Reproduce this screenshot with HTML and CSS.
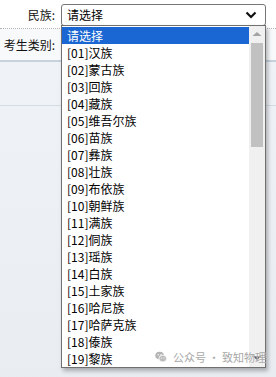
FILE: index.html
```html
<!DOCTYPE html>
<html>
<head>
<meta charset="utf-8">
<link rel="stylesheet" href="styles.css">
</head>
<body>
<div class="page">
  <div class="row row-top">
    <span class="label">民族:</span>
    <div class="select">
      <span class="select-text">请选择</span>
      <svg class="chev" width="12" height="8" viewBox="0 0 12 8"><polyline points="1.5,1.5 6,6 10.5,1.5" fill="none" stroke="#111" stroke-width="2.2"/></svg>
    </div>
  </div>
  <div class="row row-second">
    <span class="label">考生类别:</span>
  </div>
  <div class="rest">
    <div class="rest-line"></div>
  </div>

  <div class="dropdown">
    <ul class="options">
      <li class="opt sel">请选择</li>
      <li class="opt">[01]汉族</li>
      <li class="opt">[02]蒙古族</li>
      <li class="opt">[03]回族</li>
      <li class="opt">[04]藏族</li>
      <li class="opt">[05]维吾尔族</li>
      <li class="opt">[06]苗族</li>
      <li class="opt">[07]彝族</li>
      <li class="opt">[08]壮族</li>
      <li class="opt">[09]布依族</li>
      <li class="opt">[10]朝鲜族</li>
      <li class="opt">[11]满族</li>
      <li class="opt">[12]侗族</li>
      <li class="opt">[13]瑶族</li>
      <li class="opt">[14]白族</li>
      <li class="opt">[15]土家族</li>
      <li class="opt">[16]哈尼族</li>
      <li class="opt">[17]哈萨克族</li>
      <li class="opt">[18]傣族</li>
      <li class="opt">[19]黎族</li>
    </ul>
    <div class="scrollbar">
      <svg class="arrow" width="16" height="17" viewBox="0 0 16 17"><polygon points="3.5,10 12.5,10 8,6" fill="#a3a3a3"/></svg>
      <div class="track"><div class="thumb"></div></div>
      <svg class="arrow" width="16" height="17" viewBox="0 0 16 17"><polygon points="3.5,6 12.5,6 8,10" fill="#505050"/></svg>
    </div>
  </div>

  <div class="watermark">
    <svg class="wx" width="12" height="12" viewBox="0 0 12 12">
      <ellipse cx="4.6" cy="4.6" rx="4.3" ry="3.8" fill="#b4b4b4"/>
      <ellipse cx="7.8" cy="7.6" rx="3.9" ry="3.4" fill="#bdbdbd" stroke="#fff" stroke-width="0.8"/>
      <circle cx="3.2" cy="3.8" r="0.7" fill="#fff"/>
      <circle cx="6" cy="3.8" r="0.7" fill="#fff"/>
      <circle cx="6.6" cy="7" r="0.55" fill="#fff"/>
      <circle cx="9" cy="7" r="0.55" fill="#fff"/>
    </svg>
    <span class="wm-text">公众号 · 致知物理</span>
  </div>
</div>
</body>
</html>
```

FILE: styles.css
```css
html, body {
  margin: 0;
  padding: 0;
}
body {
  width: 276px;
  height: 377px;
  overflow: hidden;
  font-family: "Noto Sans CJK SC", "Noto Sans", sans-serif;
  font-size: 12px;
  color: #000;
}
.page {
  position: relative;
  width: 276px;
  height: 377px;
  display: flex;
  flex-direction: column;
  background: #ffffff;
}
.row {
  display: flex;
  align-items: center;
}
.row-top {
  height: 29px;
  border-bottom: 1px dotted #b5b5b5;
  box-sizing: border-box;
  padding-top: 1px;
}
.row-second {
  height: 30px;
  background: #f8f9fb;
  border-bottom: 2px solid #c6d1dc;
  padding-bottom: 1px;
}
.label {
  flex: none;
  width: 61px;
  padding-right: 6px;
  box-sizing: border-box;
  text-align: right;
  white-space: nowrap;
  color: #111;
  font-size: 12px;
}
.select {
  width: 205px;
  height: 22px;
  box-sizing: border-box;
  border: 1px solid #767676;
  border-radius: 3px;
  background: #fff;
  display: flex;
  align-items: center;
  justify-content: space-between;
  padding: 0 8px 0 5px;
}
.select-text {
  font-size: 12px;
  line-height: 20px;
}
.chev {
  display: block;
}
.rest {
  flex: 1;
  background: linear-gradient(#eff2f7, #e9ecf1);
  position: relative;
}
.rest-line {
  margin-top: 43px;
  height: 1px;
  background: #d3dbe4;
}
.dropdown {
  position: absolute;
  left: 61px;
  top: 25px;
  width: 205px;
  height: 343px;
  box-sizing: border-box;
  border: 1px solid #707070;
  background: #fff;
  display: flex;
  box-shadow: 2px 3px 4px rgba(0, 0, 0, 0.28);
}
.options {
  list-style: none;
  margin: 0;
  padding: 1px 0 0 0;
  flex: 1;
  overflow: hidden;
}
.opt {
  height: 17px;
  line-height: 17px;
  padding-left: 5px;
  white-space: nowrap;
  font-size: 12px;
}
.opt.sel {
  background: #1a66d2;
  color: #fff;
}
.scrollbar {
  width: 16px;
  flex: none;
  background: #f0f0f0;
  display: flex;
  flex-direction: column;
}
.arrow {
  display: block;
  width: 16px;
  height: 17px;
  flex: none;
}
.track {
  flex: 1;
  padding: 0 2px;
}
.thumb {
  height: 104px;
  background: #c1c1c1;
}
.watermark {
  position: absolute;
  left: 155px;
  top: 350px;
  display: flex;
  align-items: center;
  gap: 6px;
  color: #a8a8a8;
  font-size: 11px;
  line-height: 14px;
  text-shadow: 0 0 1px #fff;
}
.wx {
  display: block;
}
```
